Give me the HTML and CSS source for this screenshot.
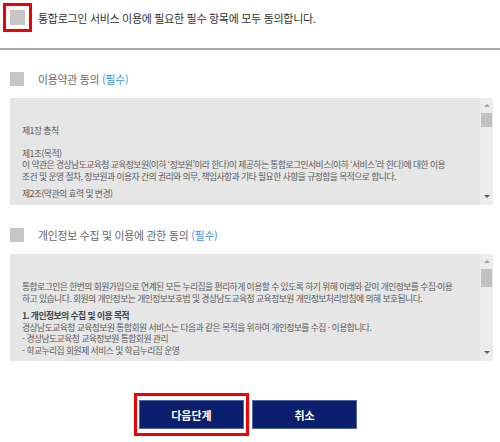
FILE: index.html
```html
<!DOCTYPE html>
<html lang="ko">
  <head>
    <meta charset="UTF-8" />
    <title>통합로그인 약관 동의</title>
    <link rel="stylesheet" href="styles.css">
  </head>
  <body>
    <div class="all-agree">
      <span class="mark-box"><span class="check"></span></span>
      <span class="all-text">통합로그인 서비스 이용에 필요한 필수 항목에 모두 동의합니다.</span>
    </div>

    <div class="section">
      <div class="label-row">
        <span class="check"></span>
        <span class="label">이용약관 동의 <em>(필수)</em></span>
      </div>
      <div class="terms-box">
        <div class="terms-text">
          <p class="chapter">제1장 총칙</p>
          <p>제1조(목적)<br>이 약관은 경상남도교육청 교육정보원(이하 ‘정보원’이라 한다)이 제공하는 통합로그인서비스(이하 ‘서비스’라 한다)에 대한 이용<br>조건 및 운영 절차, 정보원과 이용자 간의 권리와 의무, 책임사항과 기타 필요한 사항을 규정함을 목적으로 합니다.</p>
          <p>제2조(약관의 효력 및 변경)</p>
        </div>
        <div class="scrollbar">
          <span class="arrow up"></span>
          <span class="thumb"></span>
          <span class="track"></span>
          <span class="arrow down"></span>
        </div>
      </div>
    </div>

    <div class="section">
      <div class="label-row">
        <span class="check"></span>
        <span class="label">개인정보 수집 및 이용에 관한 동의 <em>(필수)</em></span>
      </div>
      <div class="terms-box">
        <div class="terms-text">
          <p>통합로그인은 한번의 회원가입으로 연계된 모든 누리집을 편리하게 이용할 수 있도록 하기 위해 아래와 같이 개인정보를 수집·이용<br>하고 있습니다. 회원의 개인정보는 개인정보보호법 및 경상남도교육청 교육정보원 개인정보처리방침에 의해 보호됩니다.</p>
          <p><b>1. 개인정보의 수집 및 이용 목적</b><br>경상남도교육청 교육정보원 통합회원 서비스는 다음과 같은 목적을 위하여 개인정보를 수집 · 이용합니다.<br>- 경상남도교육청 교육정보원 통합회원 관리<br>- 학교누리집 회원제 서비스 및 학급누리집 운영</p>
        </div>
        <div class="scrollbar">
          <span class="arrow up"></span>
          <span class="thumb tall"></span>
          <span class="track"></span>
          <span class="arrow down"></span>
        </div>
      </div>
    </div>

    <div class="buttons">
      <span class="focus-ring"><button class="btn">다음단계</button></span>
      <button class="btn">취소</button>
    </div>
  </body>
</html>
```

FILE: styles.css
```css
body {
  margin: 0;
  font-family: "Noto Sans CJK KR", "Noto Sans", sans-serif;
  background-color: #fff;
  color: #333;
}

.all-agree {
  display: flex;
  align-items: center;
  padding: 3px 3px 16px;
  height: 29px;
  border-bottom: 2px solid #a8a8a8;
}

.mark-box {
  display: flex;
  border: 3px solid #f00000;
  padding: 4px;
}

.check {
  display: block;
  width: 15px;
  height: 15px;
  background-color: #c6c6c6;
}

.all-text {
  margin-left: 6px;
  font-size: 11px;
  letter-spacing: -0.3px;
  color: #333;
}

.section {
  padding: 0 7px 0 10px;
}

.label-row {
  display: flex;
  align-items: center;
  height: 14px;
  margin-top: 22px;
}

.label-row .check {
  width: 14px;
  height: 14px;
}

.label {
  margin-left: 14px;
  font-size: 10.8px;
  letter-spacing: -0.2px;
  color: #666;
}

.label em {
  font-style: normal;
  color: #3c8ee6;
}

.terms-box {
  display: flex;
  margin-top: 12px;
  height: 107px;
  background-color: #e6e6e6;
}

.terms-text {
  flex: 1;
  overflow: hidden;
  padding: 27px 0 0 12px;
  font-size: 8.8px;
  line-height: 11.5px;
  letter-spacing: -0.55px;
  color: #5a5a5a;
  white-space: nowrap;
}

.terms-text p {
  margin: 0 0 6px;
}

.terms-text .chapter {
  margin-bottom: 11px;
}

.terms-text b {
  color: #444;
}

.scrollbar {
  display: flex;
  flex-direction: column;
  align-items: center;
  width: 13px;
  padding: 4px 0 5px;
  background-color: #ececec;
}

.arrow {
  width: 0;
  height: 0;
  border-left: 3px solid transparent;
  border-right: 3px solid transparent;
  margin: 2px 0;
}

.arrow.up {
  border-bottom: 3px solid #a0a0a0;
}

.arrow.down {
  border-top: 3px solid #606060;
}

.thumb {
  width: 11px;
  height: 14px;
  margin-top: 4px;
  background-color: #c1c1c1;
}

.thumb.tall {
  height: 18px;
}

.track {
  flex: 1;
}

.section + .section .label-row {
  margin-top: 23px;
}

.buttons {
  display: flex;
  justify-content: center;
  align-items: center;
  gap: 3px;
  margin-top: 32px;
  padding-right: 9px;
}

.focus-ring {
  display: flex;
  border: 3px solid #f00000;
  padding: 4px 2px;
}

.btn {
  width: 105px;
  height: 29px;
  border: 1px solid #5565a0;
  background-color: #0a1f6e;
  color: #fff;
  font-family: inherit;
  font-size: 11px;
  font-weight: bold;
  cursor: pointer;
}
```
